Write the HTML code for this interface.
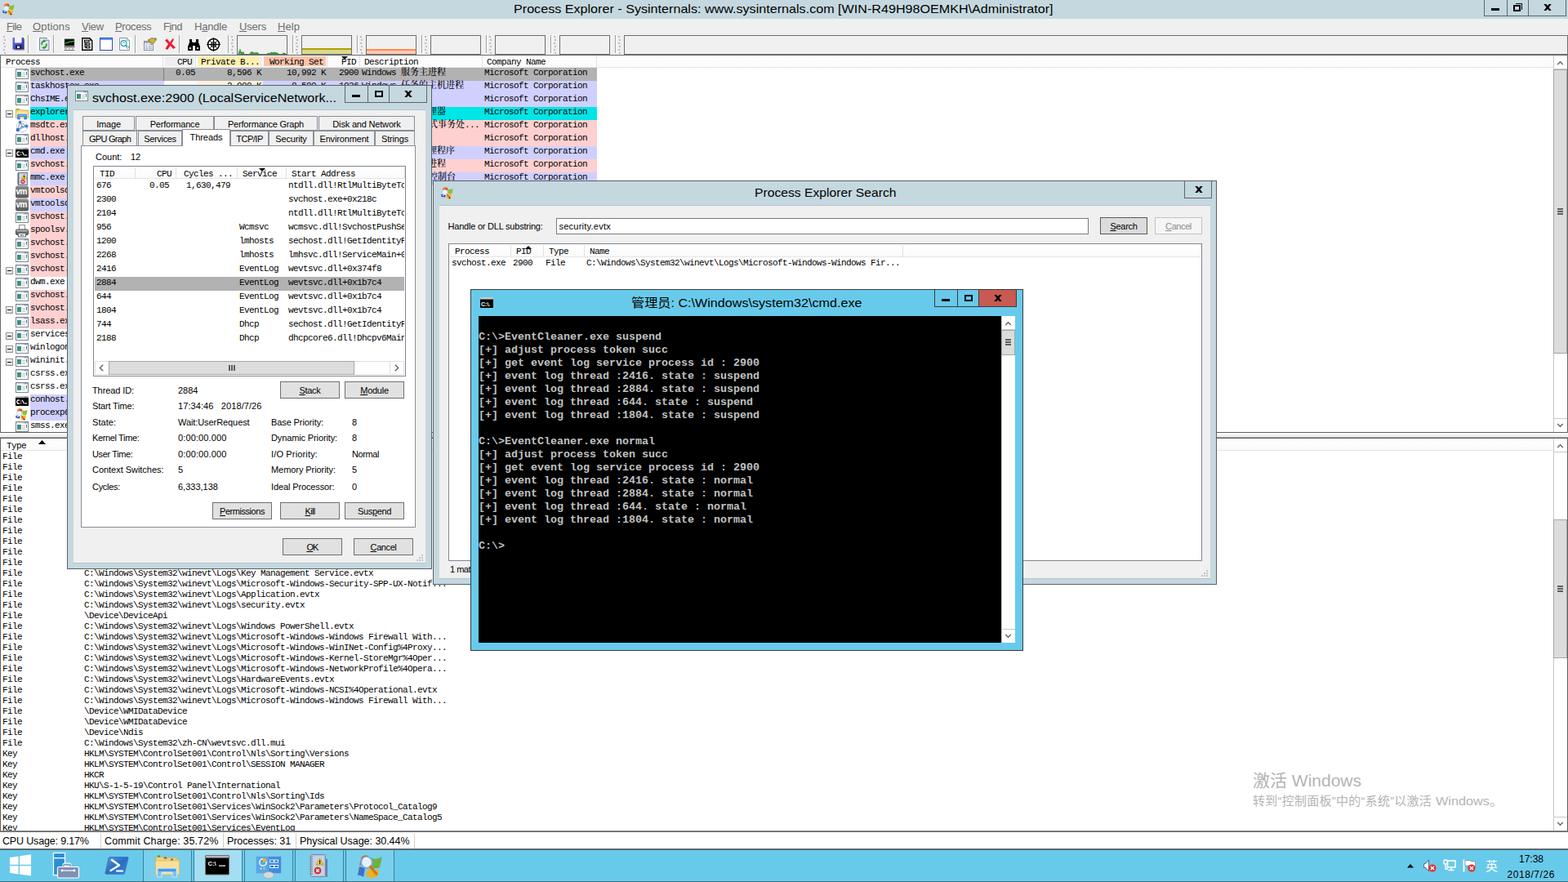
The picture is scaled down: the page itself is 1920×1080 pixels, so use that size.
<!DOCTYPE html><html><head><meta charset="utf-8"><title>Process Explorer</title><style>
*{box-sizing:border-box;margin:0;padding:0}
html,body{width:1920px;height:1080px;overflow:hidden;background:#fff}
body{position:relative;font-family:"Liberation Sans","Noto Sans CJK SC",sans-serif;font-size:11px;color:#000}
.a{position:absolute}
.m{font-family:"Liberation Mono","Noto Serif CJK SC",monospace;font-size:11px;letter-spacing:-0.6px;white-space:pre;line-height:14px;color:#000}
.c{font-family:"Liberation Serif","Noto Serif CJK SC",serif;font-size:11px;letter-spacing:0;line-height:0;font-weight:500;-webkit-text-stroke:0}
.t{white-space:pre;line-height:14px;font-size:11px}
.btn{position:absolute;border:1px solid #707070;background:#e1e1e1;text-align:center;font-size:11px;line-height:19px;white-space:pre}
.btn u{text-decoration:underline}
.tab{position:absolute;border:1px solid #898e98;border-bottom:none;background:#f0f0f0;text-align:center;font-size:11px;line-height:17px;white-space:pre}
.hd{position:absolute;background:#fff;border-right:1px solid #e5e5e5}
.cmd{font-family:"Liberation Mono",monospace;font-weight:bold;font-size:13.33px;line-height:16px;color:#c0c0c0;white-space:pre;letter-spacing:0}
</style></head><body>
<svg width="0" height="0" style="position:absolute"><defs><linearGradient id="wg" x1="0" y1="0" x2="1" y2="1"><stop offset="0" stop-color="#38789c"/><stop offset="1" stop-color="#4aa868"/></linearGradient><linearGradient id="wb" x1="0" y1="0" x2="0" y2="1"><stop offset="0" stop-color="#2848c0"/><stop offset="1" stop-color="#40a860"/></linearGradient></defs></svg>
<div class="a " style="left:0px;top:0px;width:1920px;height:23px;background:#c5d8df"></div>
<div class="a t" style="left:629px;top:1px;font-size:15px;line-height:20px;transform-origin:0 0;transform:scaleX(1.0753);">Process Explorer - Sysinternals: www.sysinternals.com [WIN-R49H98OEMKH\Administrator]</div>
<svg class="a" style="left:3px;top:3px" width="16" height="16" viewBox="0 0 16 16"><path d="M2 5 Q2.2 1.2 5.5 1 Q8.8 1.2 8.3 5Z" fill="#e8501c"/><path d="M3 3.2 Q4.5 1.2 6.5 1.6" stroke="#f8a030" stroke-width="1.2" fill="none"/><path d="M8.4 3.6 Q11 4.6 14.6 3 L13.4 8.6 Q11 9.6 8.4 8.6Z" fill="#86c03c"/><path d="M0.3 9.8 L5.5 11 L5 13.4 L0.3 12.8Z" fill="#2a48b4"/><path d="M1.2 11.2 L3 10.2 L3.6 12.2Z" fill="#d8ecff"/><path d="M7 9.4 Q10 10.2 13 9 L12 15 Q9 15.6 6.4 14.2Z" fill="#f6b61e"/><circle cx="4.6" cy="7.3" r="3.1" fill="#eaf8ff" stroke="#b0cce8" stroke-width="0.8"/><path d="M7.4 10.2 L10.6 14.2" stroke="#e0502a" stroke-width="1.3"/><path d="M10 14 L11 15" stroke="#201008" stroke-width="1.4"/></svg>
<div class="a " style="left:1817px;top:0px;width:101px;height:20px;border:1px solid #5e666e;border-top:none"></div>
<div class="a " style="left:1845px;top:0px;width:1px;height:19px;background:#5e666e"></div>
<div class="a " style="left:1871px;top:0px;width:1px;height:19px;background:#5e666e"></div>
<div class="a " style="left:1826px;top:10px;width:10px;height:3px;background:#000"></div>
<div class="a " style="left:1856px;top:4px;width:8px;height:8px;border-top:1.5px solid #000;border-right:1.5px solid #000"></div>
<div class="a " style="left:1853px;top:6px;width:9px;height:8px;border:2px solid #000;background:#c5d8df"></div>
<svg class="a" style="left:1890px;top:5px" width="10" height="8" viewBox="0 0 10 8"><path d="M0.3 0 L3.3 0 L5 2.3 L6.7 0 L9.7 0 L6.5 4 L9.7 8 L6.7 8 L5 5.7 L3.3 8 L0.3 8 L3.5 4Z" fill="#000"/></svg>
<div class="a " style="left:0px;top:23px;width:1920px;height:20px;background:#f0f0f0"></div>
<div class="a t" style="left:8px;top:24px;font-size:13px;line-height:17px;letter-spacing:-0.662px;color:#6d6d6d"><u>F</u>ile</div>
<div class="a t" style="left:40px;top:24px;font-size:13px;line-height:17px;letter-spacing:0.143px;color:#6d6d6d"><u>O</u>ptions</div>
<div class="a t" style="left:100px;top:24px;font-size:13px;line-height:17px;letter-spacing:-0.295px;color:#6d6d6d"><u>V</u>iew</div>
<div class="a t" style="left:141px;top:24px;font-size:13px;line-height:17px;letter-spacing:-0.394px;color:#6d6d6d"><u>P</u>rocess</div>
<div class="a t" style="left:200px;top:24px;font-size:13px;line-height:17px;letter-spacing:-0.623px;color:#6d6d6d">F<u>i</u>nd</div>
<div class="a t" style="left:238px;top:24px;font-size:13px;line-height:17px;letter-spacing:-0.200px;color:#6d6d6d">H<u>a</u>ndle</div>
<div class="a t" style="left:293px;top:24px;font-size:13px;line-height:17px;letter-spacing:-0.190px;color:#6d6d6d"><u>U</u>sers</div>
<div class="a t" style="left:340px;top:24px;font-size:13px;line-height:17px;letter-spacing:0.066px;color:#6d6d6d"><u>H</u>elp</div>
<div class="a " style="left:0px;top:43px;width:1920px;height:25px;background:#f0f0f0"></div>
<div class="a " style="left:4px;top:44px;width:2px;height:2px;background:#bcbcbc"></div>
<div class="a " style="left:5px;top:48px;width:2px;height:2px;background:#bcbcbc"></div>
<div class="a " style="left:4px;top:52px;width:2px;height:2px;background:#bcbcbc"></div>
<div class="a " style="left:5px;top:56px;width:2px;height:2px;background:#bcbcbc"></div>
<div class="a " style="left:4px;top:60px;width:2px;height:2px;background:#bcbcbc"></div>
<div class="a " style="left:5px;top:64px;width:2px;height:2px;background:#bcbcbc"></div>
<div class="a " style="left:34px;top:43px;width:1px;height:22px;background:#a0a0a0"></div>
<div class="a " style="left:35px;top:43px;width:1px;height:22px;background:#fff"></div>
<div class="a " style="left:65px;top:43px;width:1px;height:22px;background:#a0a0a0"></div>
<div class="a " style="left:66px;top:43px;width:1px;height:22px;background:#fff"></div>
<div class="a " style="left:165px;top:43px;width:1px;height:22px;background:#a0a0a0"></div>
<div class="a " style="left:166px;top:43px;width:1px;height:22px;background:#fff"></div>
<div class="a " style="left:219px;top:43px;width:1px;height:22px;background:#a0a0a0"></div>
<div class="a " style="left:220px;top:43px;width:1px;height:22px;background:#fff"></div>
<svg class="a" style="left:15px;top:46px" width="16" height="16" viewBox="0 0 16 16"><defs><linearGradient id="flg" x1="0" y1="0" x2="1" y2="1"><stop offset="0" stop-color="#6a7af0"/><stop offset="1" stop-color="#2a2a90"/></linearGradient></defs><rect x="0.5" y="0" width="13.5" height="14.5" fill="url(#flg)"/><rect x="3" y="0" width="8.5" height="6.5" fill="#f4f4fc"/><rect x="4" y="9" width="7.5" height="5.5" fill="#202058"/><rect x="6" y="10.5" width="3" height="2.5" fill="#e0e0f0"/><path d="M2 15h12.5V1.5" stroke="#707088" stroke-width="1" fill="none"/></svg>
<svg class="a" style="left:45px;top:46px" width="17" height="16" viewBox="0 0 17 16"><rect width="17" height="16" fill="#fcfcfc"/><path d="M3.5 0.5h8.5l3 3v12h-11.5z" fill="#e4e4f0" stroke="#6878b0" stroke-width="0.9"/><path d="M12 0.5v3h3" fill="#fff" stroke="#6878b0" stroke-width="0.8"/><path d="M9.5 4 a3.6 3.6 0 0 0 -3 5.2 M8.5 12.6 a3.6 3.6 0 0 0 3 -5.2" stroke="#28a428" stroke-width="1.9" fill="none"/><path d="M8.6 2 L11.8 4.2 L8.6 6.3Z M9.4 14.6 L6.2 12.4 L9.4 10.3Z" fill="#28a428"/></svg>
<svg class="a" style="left:76px;top:46px" width="16" height="16" viewBox="0 0 16 16"><rect width="16" height="16" fill="#fcfcfc"/><rect x="3" y="1.8" width="12" height="8.4" fill="#000" stroke="#808080" stroke-width="0.8"/><path d="M4 7.5 L6 6 L8 6.2 L10 4.6 L12 5.2 L14.5 4" stroke="#30c030" stroke-width="1.3" fill="none"/><rect x="2.5" y="11" width="13" height="1.2" fill="#606060"/><path d="M3 13.7h3 M7.5 13.7h2.5 M11.5 13.7h3" stroke="#808080" stroke-width="1"/><rect x="2.5" y="15" width="13" height="1" fill="#707070"/></svg>
<svg class="a" style="left:99px;top:46px" width="16" height="16" viewBox="0 0 16 16"><rect width="16" height="16" fill="#fcfcfc"/><path d="M1.8 0.7h9l3 3V15.3h-12z" fill="#fff" stroke="#000" stroke-width="1.4"/><path d="M10.8 0.7v3h3z" fill="#000"/><path d="M4.5 3.2h5.5v2h-5.5z M6.5 7h4.5v2h-4.5z M6.5 10.8h4.5v2h-4.5z" fill="none" stroke="#000" stroke-width="1.1"/><path d="M5 5v7h1.5 M5 8h1.5" stroke="#000" stroke-width="1.1" fill="none"/></svg>
<svg class="a" style="left:122px;top:46px" width="16" height="16" viewBox="0 0 16 16"><rect x="0.5" y="0.5" width="15" height="15" fill="#fff" stroke="#3848b8"/><rect x="1" y="1" width="14" height="2" fill="#5a98f0"/></svg>
<svg class="a" style="left:145px;top:46px" width="16" height="16" viewBox="0 0 16 16"><rect width="16" height="16" fill="#fcfcfc"/><path d="M1.5 0.5h9l3 3v12h-12z" fill="#fff" stroke="#8890a0"/><path d="M10.5 0.5v3h3" fill="none" stroke="#8890a0" stroke-width="0.8"/><circle cx="6.5" cy="7" r="3.4" fill="none" stroke="#20a0b0" stroke-width="1.2"/><path d="M5 7.2 L6.5 5.6 L8 7.2" stroke="#20a0b0" stroke-width="0.9" fill="none"/><path d="M9 9.6 L10.5 11" stroke="#20a0b0" stroke-width="1.3"/><rect x="10" y="10.5" width="2.4" height="2.4" transform="rotate(45 11.2 11.7)" fill="none" stroke="#20a0b0" stroke-width="0.9"/></svg>
<svg class="a" style="left:176px;top:46px" width="16" height="16" viewBox="0 0 16 16"><rect x="0.5" y="4.5" width="11" height="11" fill="#f4f4f4" stroke="#8090a0"/><rect x="1" y="5" width="10" height="2" fill="#a0b0c8"/><path d="M2 9h3 M6 9h4 M2 11.5h3 M6 11.5h4 M2 13.5h3 M6 13.5h4" stroke="#90a0c0"/><path d="M5 3 L10 0.5 L15 2 L13 6 L9.5 8.5 L8 5Z" fill="#d8b040" stroke="#806010" stroke-width="0.7"/><path d="M12.5 0.5 l3 0 0 3.5z" fill="#30a030"/></svg>
<svg class="a" style="left:201px;top:47px" width="15" height="14" viewBox="0 0 15 14"><path d="M1 2.5 L3.5 0.5 L7 5 L10.5 0 L12 1.5 L9 6.5 L14 11 L11.5 13 L7.5 9 L4 14 L1.5 12.5 L5 7Z" fill="#f01830"/></svg>
<svg class="a" style="left:229px;top:47px" width="17" height="15" viewBox="0 0 17 15"><path d="M3 1h3v3l1 1h3l1-1V1h3v4l2 5v5h-6V9H7v6H1V10l2-5z" fill="#000"/><rect x="3" y="11" width="2" height="2" fill="#fff"/><rect x="12" y="11" width="2" height="2" fill="#fff"/></svg>
<svg class="a" style="left:253px;top:46px" width="17" height="17" viewBox="0 0 17 17"><rect width="17" height="17" fill="#fcfcfc"/><circle cx="8.5" cy="8.5" r="7" fill="#fff" stroke="#000" stroke-width="1.6"/><circle cx="8.5" cy="8.5" r="3" fill="none" stroke="#000" stroke-width="1.2"/><path d="M8.5 0v17 M0 8.5h17" stroke="#000" stroke-width="1.2"/><path d="M3.5 3.5l10 10 M13.5 3.5l-10 10" stroke="#000" stroke-width="0.8"/></svg>
<div class="a " style="left:279px;top:43px;width:1px;height:22px;background:#a0a0a0"></div>
<div class="a " style="left:280px;top:43px;width:1px;height:22px;background:#fff"></div>
<div class="a " style="left:283px;top:44px;width:2px;height:2px;background:#bcbcbc"></div>
<div class="a " style="left:284px;top:48px;width:2px;height:2px;background:#bcbcbc"></div>
<div class="a " style="left:283px;top:52px;width:2px;height:2px;background:#bcbcbc"></div>
<div class="a " style="left:284px;top:56px;width:2px;height:2px;background:#bcbcbc"></div>
<div class="a " style="left:283px;top:60px;width:2px;height:2px;background:#bcbcbc"></div>
<div class="a " style="left:284px;top:64px;width:2px;height:2px;background:#bcbcbc"></div>
<div class="a " style="left:290px;top:43px;width:62px;height:24px;border:1px solid #6e6e6e;background:#f0f0f0"></div>
<div class="a " style="left:358px;top:43px;width:1px;height:22px;background:#a0a0a0"></div>
<div class="a " style="left:359px;top:43px;width:1px;height:22px;background:#fff"></div>
<div class="a " style="left:362px;top:44px;width:2px;height:2px;background:#bcbcbc"></div>
<div class="a " style="left:363px;top:48px;width:2px;height:2px;background:#bcbcbc"></div>
<div class="a " style="left:362px;top:52px;width:2px;height:2px;background:#bcbcbc"></div>
<div class="a " style="left:363px;top:56px;width:2px;height:2px;background:#bcbcbc"></div>
<div class="a " style="left:362px;top:60px;width:2px;height:2px;background:#bcbcbc"></div>
<div class="a " style="left:363px;top:64px;width:2px;height:2px;background:#bcbcbc"></div>
<div class="a " style="left:369px;top:43px;width:62px;height:24px;border:1px solid #6e6e6e;background:#f0f0f0"></div>
<div class="a " style="left:437px;top:43px;width:1px;height:22px;background:#a0a0a0"></div>
<div class="a " style="left:438px;top:43px;width:1px;height:22px;background:#fff"></div>
<div class="a " style="left:441px;top:44px;width:2px;height:2px;background:#bcbcbc"></div>
<div class="a " style="left:442px;top:48px;width:2px;height:2px;background:#bcbcbc"></div>
<div class="a " style="left:441px;top:52px;width:2px;height:2px;background:#bcbcbc"></div>
<div class="a " style="left:442px;top:56px;width:2px;height:2px;background:#bcbcbc"></div>
<div class="a " style="left:441px;top:60px;width:2px;height:2px;background:#bcbcbc"></div>
<div class="a " style="left:442px;top:64px;width:2px;height:2px;background:#bcbcbc"></div>
<div class="a " style="left:448px;top:43px;width:62px;height:24px;border:1px solid #6e6e6e;background:#f0f0f0"></div>
<div class="a " style="left:516px;top:43px;width:1px;height:22px;background:#a0a0a0"></div>
<div class="a " style="left:517px;top:43px;width:1px;height:22px;background:#fff"></div>
<div class="a " style="left:520px;top:44px;width:2px;height:2px;background:#bcbcbc"></div>
<div class="a " style="left:521px;top:48px;width:2px;height:2px;background:#bcbcbc"></div>
<div class="a " style="left:520px;top:52px;width:2px;height:2px;background:#bcbcbc"></div>
<div class="a " style="left:521px;top:56px;width:2px;height:2px;background:#bcbcbc"></div>
<div class="a " style="left:520px;top:60px;width:2px;height:2px;background:#bcbcbc"></div>
<div class="a " style="left:521px;top:64px;width:2px;height:2px;background:#bcbcbc"></div>
<div class="a " style="left:527px;top:43px;width:62px;height:24px;border:1px solid #6e6e6e;background:#f0f0f0"></div>
<div class="a " style="left:595px;top:43px;width:1px;height:22px;background:#a0a0a0"></div>
<div class="a " style="left:596px;top:43px;width:1px;height:22px;background:#fff"></div>
<div class="a " style="left:599px;top:44px;width:2px;height:2px;background:#bcbcbc"></div>
<div class="a " style="left:600px;top:48px;width:2px;height:2px;background:#bcbcbc"></div>
<div class="a " style="left:599px;top:52px;width:2px;height:2px;background:#bcbcbc"></div>
<div class="a " style="left:600px;top:56px;width:2px;height:2px;background:#bcbcbc"></div>
<div class="a " style="left:599px;top:60px;width:2px;height:2px;background:#bcbcbc"></div>
<div class="a " style="left:600px;top:64px;width:2px;height:2px;background:#bcbcbc"></div>
<div class="a " style="left:606px;top:43px;width:62px;height:24px;border:1px solid #6e6e6e;background:#f0f0f0"></div>
<div class="a " style="left:674px;top:43px;width:1px;height:22px;background:#a0a0a0"></div>
<div class="a " style="left:675px;top:43px;width:1px;height:22px;background:#fff"></div>
<div class="a " style="left:678px;top:44px;width:2px;height:2px;background:#bcbcbc"></div>
<div class="a " style="left:679px;top:48px;width:2px;height:2px;background:#bcbcbc"></div>
<div class="a " style="left:678px;top:52px;width:2px;height:2px;background:#bcbcbc"></div>
<div class="a " style="left:679px;top:56px;width:2px;height:2px;background:#bcbcbc"></div>
<div class="a " style="left:678px;top:60px;width:2px;height:2px;background:#bcbcbc"></div>
<div class="a " style="left:679px;top:64px;width:2px;height:2px;background:#bcbcbc"></div>
<div class="a " style="left:685px;top:43px;width:62px;height:24px;border:1px solid #6e6e6e;background:#f0f0f0"></div>
<div class="a " style="left:753px;top:43px;width:1px;height:22px;background:#a0a0a0"></div>
<div class="a " style="left:754px;top:43px;width:1px;height:22px;background:#fff"></div>
<div class="a " style="left:757px;top:44px;width:2px;height:2px;background:#bcbcbc"></div>
<div class="a " style="left:758px;top:48px;width:2px;height:2px;background:#bcbcbc"></div>
<div class="a " style="left:757px;top:52px;width:2px;height:2px;background:#bcbcbc"></div>
<div class="a " style="left:758px;top:56px;width:2px;height:2px;background:#bcbcbc"></div>
<div class="a " style="left:757px;top:60px;width:2px;height:2px;background:#bcbcbc"></div>
<div class="a " style="left:758px;top:64px;width:2px;height:2px;background:#bcbcbc"></div>
<div class="a " style="left:764px;top:43px;width:1156px;height:24px;border:1px solid #6e6e6e;background:#f0f0f0"></div>
<svg class="a" style="left:291px;top:44px" width="60" height="22" viewBox="0 0 60 22"><path d="M1 22 L1.5 19 L2.5 19 L3 16 L3.5 19 L4.5 19 L5 21 L6 20 L7 19.5 L8 22Z M15 22 L16 20 L18 19.5 L19.5 20.5 L21 21 L22 20.5 L24 20.5 L25 21 L26 22Z M36 22 L37 21 L38 21.5 L40 21 L41 20 L43 20.5 L45 20 L47 20.5 L49 21 L50 22Z M55 22 L55.5 21 L58 21 L58.5 22Z" fill="#30b030" stroke="#109010" stroke-width="0.6"/><path d="M6.5 21h1.5v1h-1.5z M17 21h1.5v1h-1.5z" fill="#f03050"/><rect x="2" y="21" width="2" height="1" fill="#a0a0a0"/></svg>
<div class="a " style="left:370px;top:59px;width:60px;height:7px;background:#d9d98e;border-top:2px solid #b0a000"></div>
<div class="a " style="left:449px;top:60px;width:60px;height:6px;background:#ffc9b2;border-top:2px solid #ff8c50"></div>
<div class="a " style="left:0px;top:67px;width:1920px;height:463px;background:#fff;border:1px solid #696969;border-bottom-color:#606060"></div>
<div class="a " style="left:1px;top:68px;width:1901px;height:15px;background:linear-gradient(#fff,#fafafa);border-bottom:1px solid #e5e5e5"></div>
<div class="a " style="left:199px;top:68px;width:1px;height:14px;background:#e0e0e0"></div>
<div class="a m" style="left:7px;top:69px;">Process</div>
<div class="a " style="left:239px;top:68px;width:1px;height:14px;background:#e0e0e0"></div>
<div class="a " style="left:202px;top:69px;width:36px;height:12px;background:#efefef"></div>
<div class="a m" style="left:201px;top:69px;width:34px;text-align:right">CPU</div>
<div class="a " style="left:319px;top:68px;width:1px;height:14px;background:#e0e0e0"></div>
<div class="a " style="left:242px;top:69px;width:76px;height:12px;background:#fdf0b0"></div>
<div class="a m" style="left:246px;top:69px;">Private B...</div>
<div class="a " style="left:400px;top:68px;width:1px;height:14px;background:#e0e0e0"></div>
<div class="a " style="left:323px;top:69px;width:76px;height:12px;background:#fcc4a8"></div>
<div class="a m" style="left:322px;top:69px;width:74px;text-align:right">Working Set</div>
<div class="a " style="left:440px;top:68px;width:1px;height:14px;background:#e0e0e0"></div>
<div class="a m" style="left:402px;top:69px;width:34px;text-align:right">PID</div>
<div class="a " style="left:590px;top:68px;width:1px;height:14px;background:#e0e0e0"></div>
<div class="a m" style="left:446px;top:69px;">Description</div>
<div class="a " style="left:730px;top:68px;width:1px;height:14px;background:#e0e0e0"></div>
<div class="a m" style="left:596px;top:69px;">Company Name</div>
<svg class="a" style="left:418px;top:69px" width="8" height="4"><path d="M0 0 L8 0 L4 4Z" fill="#000"/></svg>
<div class="a " style="left:37px;top:83px;width:694px;height:16px;background:#b2b2b2"></div>
<div class="a " style="left:200px;top:83px;width:1px;height:16px;background:#808080"></div>
<div class="a m" style="left:37px;top:82px;">svchost.exe</div>
<svg class="a" style="left:19px;top:83px" width="16" height="16" viewBox="0 0 16 16"><rect x="0.5" y="1.5" width="15" height="12" fill="#fff" stroke="#7e868e"/><rect x="1" y="2" width="14" height="1.6" fill="#d4dae6"/><path d="M10.5 2.3h1v1h-1z M12 2.3h1v1h-1z M13.5 2.3h1v1h-1z" fill="#5a6a9a"/><rect x="2" y="5" width="5" height="6" fill="url(#wg)"/><path d="M8 6.5h4 M8 8.5h4 M8 10.5h4" stroke="#c4c4c4"/><rect x="13" y="5" width="1" height="4" fill="url(#wb)"/></svg>
<div class="a m" style="left:149px;top:82px;width:90px;text-align:right">0.05</div>
<div class="a m" style="left:230px;top:82px;width:90px;text-align:right">8,596 K</div>
<div class="a m" style="left:309px;top:82px;width:90px;text-align:right">10,992 K</div>
<div class="a m" style="left:349px;top:82px;width:90px;text-align:right">2900</div>
<div class="a m" style="left:443px;top:82px;">Windows <span class="c">服务主进程</span></div>
<div class="a m" style="left:593px;top:82px;">Microsoft Corporation</div>
<div class="a " style="left:37px;top:99px;width:694px;height:16px;background:#d0d0ff"></div>
<div class="a " style="left:201px;top:99px;width:40px;height:16px;background:#f8f8f8"></div>
<div class="a " style="left:241px;top:99px;width:81px;height:16px;background:#fff0e0"></div>
<div class="a m" style="left:37px;top:98px;">taskhostex.exe</div>
<svg class="a" style="left:19px;top:99px" width="16" height="16" viewBox="0 0 16 16"><rect x="0.5" y="1.5" width="15" height="12" fill="#fff" stroke="#7e868e"/><rect x="1" y="2" width="14" height="1.6" fill="#d4dae6"/><path d="M10.5 2.3h1v1h-1z M12 2.3h1v1h-1z M13.5 2.3h1v1h-1z" fill="#5a6a9a"/><rect x="2" y="5" width="5" height="6" fill="url(#wg)"/><path d="M8 6.5h4 M8 8.5h4 M8 10.5h4" stroke="#c4c4c4"/><rect x="13" y="5" width="1" height="4" fill="url(#wb)"/></svg>
<div class="a m" style="left:230px;top:98px;width:90px;text-align:right">2,908 K</div>
<div class="a m" style="left:309px;top:98px;width:90px;text-align:right">8,580 K</div>
<div class="a m" style="left:349px;top:98px;width:90px;text-align:right">1936</div>
<div class="a m" style="left:443px;top:98px;">Windows <span class="c">任务的主机进程</span></div>
<div class="a m" style="left:593px;top:98px;">Microsoft Corporation</div>
<div class="a " style="left:37px;top:115px;width:694px;height:16px;background:#d0d0ff"></div>
<div class="a m" style="left:37px;top:114px;">ChsIME.exe</div>
<svg class="a" style="left:19px;top:115px" width="16" height="16" viewBox="0 0 16 16"><rect x="0.5" y="1.5" width="15" height="12" fill="#fff" stroke="#7e868e"/><rect x="1" y="2" width="14" height="1.6" fill="#d4dae6"/><path d="M10.5 2.3h1v1h-1z M12 2.3h1v1h-1z M13.5 2.3h1v1h-1z" fill="#5a6a9a"/><rect x="2" y="5" width="5" height="6" fill="url(#wg)"/><path d="M8 6.5h4 M8 8.5h4 M8 10.5h4" stroke="#c4c4c4"/><rect x="13" y="5" width="1" height="4" fill="url(#wb)"/></svg>
<div class="a m" style="left:593px;top:114px;">Microsoft Corporation</div>
<div class="a " style="left:37px;top:131px;width:694px;height:16px;background:#00e6e6"></div>
<div class="a m" style="left:37px;top:130px;">explorer.exe</div>
<div class="a " style="left:7px;top:135px;width:9px;height:9px;border:1px solid #919191;background:linear-gradient(#fff,#dcdcdc)"></div>
<div class="a " style="left:9px;top:139px;width:5px;height:1px;background:#000"></div>
<svg class="a" style="left:19px;top:131px" width="16" height="16" viewBox="0 0 16 16"><path d="M0.5 2.5h5l1.5 1.5h8.5v9.5h-15z" fill="#f6d988" stroke="#d9ae48"/><rect x="1.5" y="2.7" width="2.5" height="1" fill="#30a030"/><path d="M1 6h14v7.5h-14z" fill="#fbe7a6"/><path d="M3.5 9 h9 a1 1 0 0 1 1 1 V15 h-3 v-3 h-5 v3 h-3 V10 a1 1 0 0 1 1 -1Z" fill="#3f8fe4" stroke="#2a68c0" stroke-width="0.6"/><rect x="5.5" y="12" width="5" height="2" fill="#f6d988"/><path d="M3.5 10.2h9" stroke="#9ccbf6" stroke-width="1"/></svg>
<div class="a m" style="left:443px;top:130px;">Windows <span class="c">资源管理器</span></div>
<div class="a m" style="left:593px;top:130px;">Microsoft Corporation</div>
<div class="a " style="left:37px;top:147px;width:694px;height:16px;background:#ffd0d0"></div>
<div class="a m" style="left:37px;top:146px;">msdtc.exe</div>
<svg class="a" style="left:19px;top:147px" width="16" height="16" viewBox="0 0 16 16"><circle cx="8" cy="8" r="6.8" fill="none" stroke="#c8ccd4" stroke-width="1"/><path d="M5.5 2.5 L2.8 12 L13.5 7.5Z M5.5 2.5 L8 8 L2.8 12 M8 8 L13.5 7.5" fill="none" stroke="#8aa0c0" stroke-width="1.1"/><circle cx="5.5" cy="2.5" r="1.7" fill="#4a7ed0"/><circle cx="2.8" cy="12" r="2.2" fill="#3a70c8"/><circle cx="13.5" cy="7.5" r="2" fill="#4a7ed0"/><circle cx="8" cy="8" r="1.2" fill="#6a94d8"/></svg>
<div class="a m" style="left:443px;top:146px;">Microsoft <span class="c">分布式事务处</span>...</div>
<div class="a m" style="left:593px;top:146px;">Microsoft Corporation</div>
<div class="a " style="left:37px;top:163px;width:694px;height:16px;background:#ffd0d0"></div>
<div class="a m" style="left:37px;top:162px;">dllhost.exe</div>
<svg class="a" style="left:19px;top:163px" width="16" height="16" viewBox="0 0 16 16"><rect x="0.5" y="1.5" width="15" height="12" fill="#fff" stroke="#7e868e"/><rect x="1" y="2" width="14" height="1.6" fill="#d4dae6"/><path d="M10.5 2.3h1v1h-1z M12 2.3h1v1h-1z M13.5 2.3h1v1h-1z" fill="#5a6a9a"/><rect x="2" y="5" width="5" height="6" fill="url(#wg)"/><path d="M8 6.5h4 M8 8.5h4 M8 10.5h4" stroke="#c4c4c4"/><rect x="13" y="5" width="1" height="4" fill="url(#wb)"/></svg>
<div class="a m" style="left:593px;top:162px;">Microsoft Corporation</div>
<div class="a " style="left:37px;top:179px;width:694px;height:16px;background:#d0d0ff"></div>
<div class="a m" style="left:37px;top:178px;">cmd.exe</div>
<div class="a " style="left:7px;top:183px;width:9px;height:9px;border:1px solid #919191;background:linear-gradient(#fff,#dcdcdc)"></div>
<div class="a " style="left:9px;top:187px;width:5px;height:1px;background:#000"></div>
<svg class="a" style="left:19px;top:179px" width="16" height="16" viewBox="0 0 16 16"><rect x="0" y="2" width="16" height="12" fill="#000"/><rect x="0" y="2" width="16" height="2" fill="#b8bcc4"/><path d="M10.5 2.5h1v1h-1z M12 2.5h1v1h-1z M13.5 2.5h1v1h-1z" fill="#5a6a9a"/><path d="M5 7.3 A2 2.2 0 1 0 5 10.7" stroke="#fff" stroke-width="1.3" fill="none"/><path d="M6.6 7.6v1 M6.6 10v1" stroke="#fff" stroke-width="1.2"/><path d="M8.2 6.8 L10.5 11.2" stroke="#fff" stroke-width="1.2"/><path d="M11.3 11h2.5" stroke="#fff" stroke-width="1.4"/></svg>
<div class="a m" style="left:443px;top:178px;">Windows <span class="c">命令处理程序</span></div>
<div class="a m" style="left:593px;top:178px;">Microsoft Corporation</div>
<div class="a " style="left:37px;top:195px;width:694px;height:16px;background:#ffd0d0"></div>
<div class="a m" style="left:37px;top:194px;">svchost.exe</div>
<svg class="a" style="left:19px;top:195px" width="16" height="16" viewBox="0 0 16 16"><rect x="0.5" y="1.5" width="15" height="12" fill="#fff" stroke="#7e868e"/><rect x="1" y="2" width="14" height="1.6" fill="#d4dae6"/><path d="M10.5 2.3h1v1h-1z M12 2.3h1v1h-1z M13.5 2.3h1v1h-1z" fill="#5a6a9a"/><rect x="2" y="5" width="5" height="6" fill="url(#wg)"/><path d="M8 6.5h4 M8 8.5h4 M8 10.5h4" stroke="#c4c4c4"/><rect x="13" y="5" width="1" height="4" fill="url(#wb)"/></svg>
<div class="a m" style="left:443px;top:194px;">Windows <span class="c">服务主进程</span></div>
<div class="a m" style="left:593px;top:194px;">Microsoft Corporation</div>
<div class="a " style="left:37px;top:211px;width:694px;height:16px;background:#d0d0ff"></div>
<div class="a m" style="left:37px;top:210px;">mmc.exe</div>
<svg class="a" style="left:19px;top:211px" width="16" height="16" viewBox="0 0 16 16"><rect x="3.5" y="0.5" width="11" height="15" fill="#c4cee4" stroke="#6a7cb0"/><path d="M5 3.5h8 M5 5.5h8 M5 7.5h8 M5 9.5h8 M5 11.5h8 M5 13.5h8" stroke="#e4e9f4" stroke-width="0.8"/><path d="M2 2h2.5 M2 4h2.5 M2 6h2.5 M2 8h2.5 M2 10h2.5 M2 12h2.5 M2 14h2.5" stroke="#50586a" stroke-width="1"/><path d="M10.5 2 L13.8 8h-6.6z" fill="#f8d020" stroke="#b08800" stroke-width="0.5"/><path d="M10.5 4v2.2 M10.5 6.8v0.8" stroke="#000" stroke-width="0.9"/><circle cx="9" cy="11.5" r="2.7" fill="#e03838"/><path d="M8 10.5l2 2M10 10.5l-2 2" stroke="#fff" stroke-width="0.9"/></svg>
<div class="a m" style="left:443px;top:210px;">Microsoft <span class="c">管理控制台</span></div>
<div class="a m" style="left:593px;top:210px;">Microsoft Corporation</div>
<div class="a " style="left:37px;top:227px;width:120px;height:16px;background:#ffd0d0"></div>
<div class="a m" style="left:37px;top:226px;">vmtoolsd.exe</div>
<svg class="a" style="left:19px;top:227px" width="16" height="16" viewBox="0 0 16 16"><defs><linearGradient id="vmg" x1="0" y1="0" x2="0" y2="1"><stop offset="0" stop-color="#8c8c8c"/><stop offset="1" stop-color="#585858"/></linearGradient></defs><rect x="0" y="0.5" width="16" height="15" rx="2.5" fill="url(#vmg)"/><text x="0.6" y="11.3" font-family="Liberation Sans, sans-serif" font-size="10" font-weight="bold" fill="#fff" letter-spacing="-0.7">vm</text></svg>
<div class="a " style="left:37px;top:243px;width:120px;height:16px;background:#d0d0ff"></div>
<div class="a m" style="left:37px;top:242px;">vmtoolsd.exe</div>
<svg class="a" style="left:19px;top:243px" width="16" height="16" viewBox="0 0 16 16"><defs><linearGradient id="vmg" x1="0" y1="0" x2="0" y2="1"><stop offset="0" stop-color="#8c8c8c"/><stop offset="1" stop-color="#585858"/></linearGradient></defs><rect x="0" y="0.5" width="16" height="15" rx="2.5" fill="url(#vmg)"/><text x="0.6" y="11.3" font-family="Liberation Sans, sans-serif" font-size="10" font-weight="bold" fill="#fff" letter-spacing="-0.7">vm</text></svg>
<div class="a " style="left:37px;top:259px;width:120px;height:16px;background:#ffd0d0"></div>
<div class="a m" style="left:37px;top:258px;">svchost.exe</div>
<svg class="a" style="left:19px;top:259px" width="16" height="16" viewBox="0 0 16 16"><rect x="0.5" y="1.5" width="15" height="12" fill="#fff" stroke="#7e868e"/><rect x="1" y="2" width="14" height="1.6" fill="#d4dae6"/><path d="M10.5 2.3h1v1h-1z M12 2.3h1v1h-1z M13.5 2.3h1v1h-1z" fill="#5a6a9a"/><rect x="2" y="5" width="5" height="6" fill="url(#wg)"/><path d="M8 6.5h4 M8 8.5h4 M8 10.5h4" stroke="#c4c4c4"/><rect x="13" y="5" width="1" height="4" fill="url(#wb)"/></svg>
<div class="a " style="left:37px;top:275px;width:120px;height:16px;background:#ffd0d0"></div>
<div class="a m" style="left:37px;top:274px;">spoolsv.exe</div>
<svg class="a" style="left:19px;top:275px" width="16" height="16" viewBox="0 0 16 16"><rect x="4.5" y="0.5" width="7" height="6" fill="#fff" stroke="#909090"/><rect x="0.5" y="6" width="15" height="6.5" rx="1.5" fill="#707070" stroke="#484848"/><rect x="1" y="6.5" width="14" height="2" rx="1" fill="#b0b0b0"/><rect x="3.5" y="10.5" width="9" height="4.5" fill="#fff" stroke="#606060"/><rect x="6" y="12" width="2" height="1.5" fill="#3060d0"/><rect x="8.5" y="12" width="1.5" height="1.5" fill="#30a040"/></svg>
<div class="a " style="left:37px;top:291px;width:120px;height:16px;background:#ffd0d0"></div>
<div class="a m" style="left:37px;top:290px;">svchost.exe</div>
<svg class="a" style="left:19px;top:291px" width="16" height="16" viewBox="0 0 16 16"><rect x="0.5" y="1.5" width="15" height="12" fill="#fff" stroke="#7e868e"/><rect x="1" y="2" width="14" height="1.6" fill="#d4dae6"/><path d="M10.5 2.3h1v1h-1z M12 2.3h1v1h-1z M13.5 2.3h1v1h-1z" fill="#5a6a9a"/><rect x="2" y="5" width="5" height="6" fill="url(#wg)"/><path d="M8 6.5h4 M8 8.5h4 M8 10.5h4" stroke="#c4c4c4"/><rect x="13" y="5" width="1" height="4" fill="url(#wb)"/></svg>
<div class="a " style="left:37px;top:307px;width:120px;height:16px;background:#ffd0d0"></div>
<div class="a m" style="left:37px;top:306px;">svchost.exe</div>
<svg class="a" style="left:19px;top:307px" width="16" height="16" viewBox="0 0 16 16"><rect x="0.5" y="1.5" width="15" height="12" fill="#fff" stroke="#7e868e"/><rect x="1" y="2" width="14" height="1.6" fill="#d4dae6"/><path d="M10.5 2.3h1v1h-1z M12 2.3h1v1h-1z M13.5 2.3h1v1h-1z" fill="#5a6a9a"/><rect x="2" y="5" width="5" height="6" fill="url(#wg)"/><path d="M8 6.5h4 M8 8.5h4 M8 10.5h4" stroke="#c4c4c4"/><rect x="13" y="5" width="1" height="4" fill="url(#wb)"/></svg>
<div class="a " style="left:37px;top:323px;width:120px;height:16px;background:#ffd0d0"></div>
<div class="a m" style="left:37px;top:322px;">svchost.exe</div>
<div class="a " style="left:7px;top:327px;width:9px;height:9px;border:1px solid #919191;background:linear-gradient(#fff,#dcdcdc)"></div>
<div class="a " style="left:9px;top:331px;width:5px;height:1px;background:#000"></div>
<svg class="a" style="left:19px;top:323px" width="16" height="16" viewBox="0 0 16 16"><rect x="0.5" y="1.5" width="15" height="12" fill="#fff" stroke="#7e868e"/><rect x="1" y="2" width="14" height="1.6" fill="#d4dae6"/><path d="M10.5 2.3h1v1h-1z M12 2.3h1v1h-1z M13.5 2.3h1v1h-1z" fill="#5a6a9a"/><rect x="2" y="5" width="5" height="6" fill="url(#wg)"/><path d="M8 6.5h4 M8 8.5h4 M8 10.5h4" stroke="#c4c4c4"/><rect x="13" y="5" width="1" height="4" fill="url(#wb)"/></svg>
<div class="a m" style="left:37px;top:338px;">dwm.exe</div>
<svg class="a" style="left:19px;top:339px" width="16" height="16" viewBox="0 0 16 16"><rect x="0.5" y="1.5" width="15" height="12" fill="#fff" stroke="#7e868e"/><rect x="1" y="2" width="14" height="1.6" fill="#d4dae6"/><path d="M10.5 2.3h1v1h-1z M12 2.3h1v1h-1z M13.5 2.3h1v1h-1z" fill="#5a6a9a"/><rect x="2" y="5" width="5" height="6" fill="url(#wg)"/><path d="M8 6.5h4 M8 8.5h4 M8 10.5h4" stroke="#c4c4c4"/><rect x="13" y="5" width="1" height="4" fill="url(#wb)"/></svg>
<div class="a " style="left:37px;top:355px;width:120px;height:16px;background:#ffd0d0"></div>
<div class="a m" style="left:37px;top:354px;">svchost.exe</div>
<svg class="a" style="left:19px;top:355px" width="16" height="16" viewBox="0 0 16 16"><rect x="0.5" y="1.5" width="15" height="12" fill="#fff" stroke="#7e868e"/><rect x="1" y="2" width="14" height="1.6" fill="#d4dae6"/><path d="M10.5 2.3h1v1h-1z M12 2.3h1v1h-1z M13.5 2.3h1v1h-1z" fill="#5a6a9a"/><rect x="2" y="5" width="5" height="6" fill="url(#wg)"/><path d="M8 6.5h4 M8 8.5h4 M8 10.5h4" stroke="#c4c4c4"/><rect x="13" y="5" width="1" height="4" fill="url(#wb)"/></svg>
<div class="a " style="left:37px;top:371px;width:120px;height:16px;background:#ffd0d0"></div>
<div class="a m" style="left:37px;top:370px;">svchost.exe</div>
<div class="a " style="left:7px;top:375px;width:9px;height:9px;border:1px solid #919191;background:linear-gradient(#fff,#dcdcdc)"></div>
<div class="a " style="left:9px;top:379px;width:5px;height:1px;background:#000"></div>
<svg class="a" style="left:19px;top:371px" width="16" height="16" viewBox="0 0 16 16"><rect x="0.5" y="1.5" width="15" height="12" fill="#fff" stroke="#7e868e"/><rect x="1" y="2" width="14" height="1.6" fill="#d4dae6"/><path d="M10.5 2.3h1v1h-1z M12 2.3h1v1h-1z M13.5 2.3h1v1h-1z" fill="#5a6a9a"/><rect x="2" y="5" width="5" height="6" fill="url(#wg)"/><path d="M8 6.5h4 M8 8.5h4 M8 10.5h4" stroke="#c4c4c4"/><rect x="13" y="5" width="1" height="4" fill="url(#wb)"/></svg>
<div class="a " style="left:37px;top:387px;width:120px;height:16px;background:#ffd0d0"></div>
<div class="a m" style="left:37px;top:386px;">lsass.exe</div>
<svg class="a" style="left:19px;top:387px" width="16" height="16" viewBox="0 0 16 16"><rect x="0.5" y="1.5" width="15" height="12" fill="#fff" stroke="#7e868e"/><rect x="1" y="2" width="14" height="1.6" fill="#d4dae6"/><path d="M10.5 2.3h1v1h-1z M12 2.3h1v1h-1z M13.5 2.3h1v1h-1z" fill="#5a6a9a"/><rect x="2" y="5" width="5" height="6" fill="url(#wg)"/><path d="M8 6.5h4 M8 8.5h4 M8 10.5h4" stroke="#c4c4c4"/><rect x="13" y="5" width="1" height="4" fill="url(#wb)"/></svg>
<div class="a m" style="left:37px;top:402px;">services.exe</div>
<div class="a " style="left:7px;top:407px;width:9px;height:9px;border:1px solid #919191;background:linear-gradient(#fff,#dcdcdc)"></div>
<div class="a " style="left:9px;top:411px;width:5px;height:1px;background:#000"></div>
<svg class="a" style="left:19px;top:403px" width="16" height="16" viewBox="0 0 16 16"><rect x="0.5" y="1.5" width="15" height="12" fill="#fff" stroke="#7e868e"/><rect x="1" y="2" width="14" height="1.6" fill="#d4dae6"/><path d="M10.5 2.3h1v1h-1z M12 2.3h1v1h-1z M13.5 2.3h1v1h-1z" fill="#5a6a9a"/><rect x="2" y="5" width="5" height="6" fill="url(#wg)"/><path d="M8 6.5h4 M8 8.5h4 M8 10.5h4" stroke="#c4c4c4"/><rect x="13" y="5" width="1" height="4" fill="url(#wb)"/></svg>
<div class="a m" style="left:37px;top:418px;">winlogon.exe</div>
<div class="a " style="left:7px;top:423px;width:9px;height:9px;border:1px solid #919191;background:linear-gradient(#fff,#dcdcdc)"></div>
<div class="a " style="left:9px;top:427px;width:5px;height:1px;background:#000"></div>
<svg class="a" style="left:19px;top:419px" width="16" height="16" viewBox="0 0 16 16"><rect x="0.5" y="1.5" width="15" height="12" fill="#fff" stroke="#7e868e"/><rect x="1" y="2" width="14" height="1.6" fill="#d4dae6"/><path d="M10.5 2.3h1v1h-1z M12 2.3h1v1h-1z M13.5 2.3h1v1h-1z" fill="#5a6a9a"/><rect x="2" y="5" width="5" height="6" fill="url(#wg)"/><path d="M8 6.5h4 M8 8.5h4 M8 10.5h4" stroke="#c4c4c4"/><rect x="13" y="5" width="1" height="4" fill="url(#wb)"/></svg>
<div class="a m" style="left:37px;top:434px;">wininit.exe</div>
<div class="a " style="left:7px;top:439px;width:9px;height:9px;border:1px solid #919191;background:linear-gradient(#fff,#dcdcdc)"></div>
<div class="a " style="left:9px;top:443px;width:5px;height:1px;background:#000"></div>
<svg class="a" style="left:19px;top:435px" width="16" height="16" viewBox="0 0 16 16"><rect x="0.5" y="1.5" width="15" height="12" fill="#fff" stroke="#7e868e"/><rect x="1" y="2" width="14" height="1.6" fill="#d4dae6"/><path d="M10.5 2.3h1v1h-1z M12 2.3h1v1h-1z M13.5 2.3h1v1h-1z" fill="#5a6a9a"/><rect x="2" y="5" width="5" height="6" fill="url(#wg)"/><path d="M8 6.5h4 M8 8.5h4 M8 10.5h4" stroke="#c4c4c4"/><rect x="13" y="5" width="1" height="4" fill="url(#wb)"/></svg>
<div class="a m" style="left:37px;top:450px;">csrss.exe</div>
<svg class="a" style="left:19px;top:451px" width="16" height="16" viewBox="0 0 16 16"><rect x="0.5" y="1.5" width="15" height="12" fill="#fff" stroke="#7e868e"/><rect x="1" y="2" width="14" height="1.6" fill="#d4dae6"/><path d="M10.5 2.3h1v1h-1z M12 2.3h1v1h-1z M13.5 2.3h1v1h-1z" fill="#5a6a9a"/><rect x="2" y="5" width="5" height="6" fill="url(#wg)"/><path d="M8 6.5h4 M8 8.5h4 M8 10.5h4" stroke="#c4c4c4"/><rect x="13" y="5" width="1" height="4" fill="url(#wb)"/></svg>
<div class="a m" style="left:37px;top:466px;">csrss.exe</div>
<svg class="a" style="left:19px;top:467px" width="16" height="16" viewBox="0 0 16 16"><rect x="0.5" y="1.5" width="15" height="12" fill="#fff" stroke="#7e868e"/><rect x="1" y="2" width="14" height="1.6" fill="#d4dae6"/><path d="M10.5 2.3h1v1h-1z M12 2.3h1v1h-1z M13.5 2.3h1v1h-1z" fill="#5a6a9a"/><rect x="2" y="5" width="5" height="6" fill="url(#wg)"/><path d="M8 6.5h4 M8 8.5h4 M8 10.5h4" stroke="#c4c4c4"/><rect x="13" y="5" width="1" height="4" fill="url(#wb)"/></svg>
<div class="a " style="left:37px;top:483px;width:120px;height:16px;background:#d0d0ff"></div>
<div class="a m" style="left:37px;top:482px;">conhost.exe</div>
<svg class="a" style="left:19px;top:483px" width="16" height="16" viewBox="0 0 16 16"><rect x="0" y="2" width="16" height="12" fill="#000"/><rect x="0" y="2" width="16" height="2" fill="#b8bcc4"/><path d="M10.5 2.5h1v1h-1z M12 2.5h1v1h-1z M13.5 2.5h1v1h-1z" fill="#5a6a9a"/><path d="M5 7.3 A2 2.2 0 1 0 5 10.7" stroke="#fff" stroke-width="1.3" fill="none"/><path d="M6.6 7.6v1 M6.6 10v1" stroke="#fff" stroke-width="1.2"/><path d="M8.2 6.8 L10.5 11.2" stroke="#fff" stroke-width="1.2"/><path d="M11.3 11h2.5" stroke="#fff" stroke-width="1.4"/></svg>
<div class="a " style="left:37px;top:499px;width:120px;height:16px;background:#d0d0ff"></div>
<div class="a m" style="left:37px;top:498px;">procexp64.exe</div>
<svg class="a" style="left:19px;top:499px" width="16" height="16" viewBox="0 0 16 16"><path d="M2 5 Q2.2 1.2 5.5 1 Q8.8 1.2 8.3 5Z" fill="#e8501c"/><path d="M3 3.2 Q4.5 1.2 6.5 1.6" stroke="#f8a030" stroke-width="1.2" fill="none"/><path d="M8.4 3.6 Q11 4.6 14.6 3 L13.4 8.6 Q11 9.6 8.4 8.6Z" fill="#86c03c"/><path d="M0.3 9.8 L5.5 11 L5 13.4 L0.3 12.8Z" fill="#2a48b4"/><path d="M1.2 11.2 L3 10.2 L3.6 12.2Z" fill="#d8ecff"/><path d="M7 9.4 Q10 10.2 13 9 L12 15 Q9 15.6 6.4 14.2Z" fill="#f6b61e"/><circle cx="4.6" cy="7.3" r="3.1" fill="#eaf8ff" stroke="#b0cce8" stroke-width="0.8"/><path d="M7.4 10.2 L10.6 14.2" stroke="#e0502a" stroke-width="1.3"/><path d="M10 14 L11 15" stroke="#201008" stroke-width="1.4"/></svg>
<div class="a m" style="left:37px;top:514px;">smss.exe</div>
<svg class="a" style="left:19px;top:515px" width="16" height="16" viewBox="0 0 16 16"><rect x="0.5" y="1.5" width="15" height="12" fill="#fff" stroke="#7e868e"/><rect x="1" y="2" width="14" height="1.6" fill="#d4dae6"/><path d="M10.5 2.3h1v1h-1z M12 2.3h1v1h-1z M13.5 2.3h1v1h-1z" fill="#5a6a9a"/><rect x="2" y="5" width="5" height="6" fill="url(#wg)"/><path d="M8 6.5h4 M8 8.5h4 M8 10.5h4" stroke="#c4c4c4"/><rect x="13" y="5" width="1" height="4" fill="url(#wb)"/></svg>
<div class="a " style="left:1902px;top:68px;width:17px;height:461px;background:#fff;border-left:1px solid #c8c8c8"></div>
<div class="a " style="left:1902px;top:68px;width:17px;height:17px;background:#fff;border:1px solid #c8c8c8;border-top:none;border-right:none"></div>
<div class="a " style="left:1902px;top:512px;width:17px;height:17px;background:#fff;border:1px solid #c8c8c8;border-bottom:none;border-right:none"></div>
<svg class="a" style="left:1906px;top:74px" width="9" height="6"><path d="M1.2 5 L4.5 1.7 L7.8 5" stroke="#606060" stroke-width="1.3" fill="none"/></svg>
<svg class="a" style="left:1906px;top:518px" width="9" height="6"><path d="M1.2 1 L4.5 4.3 L7.8 1" stroke="#606060" stroke-width="1.3" fill="none"/></svg>
<div class="a " style="left:1902px;top:85px;width:17px;height:348px;background:#dcdcdc;border:1px solid #a6a6a6"></div>
<div class="a " style="left:1907px;top:255px;width:7px;height:2px;background:#606060"></div>
<div class="a " style="left:1907px;top:258px;width:7px;height:2px;background:#606060"></div>
<div class="a " style="left:1907px;top:261px;width:7px;height:2px;background:#606060"></div>
<div class="a " style="left:0px;top:530px;width:1920px;height:6px;background:#f0f0f0;border-top:2px solid #fff;border-bottom:1px solid #a0a0a0"></div>
<div class="a " style="left:0px;top:536px;width:1920px;height:482px;background:#fff;border:1px solid #606060;border-bottom-color:#828790"></div>
<div class="a " style="left:1px;top:537px;width:1901px;height:15px;background:linear-gradient(#fff,#fafafa);border-bottom:1px solid #e5e5e5"></div>
<div class="a m" style="left:8px;top:539px;">Type</div>
<svg class="a" style="left:47px;top:539px" width="9" height="5"><path d="M0 5 L9 5 L4.5 0Z" fill="#000"/></svg>
<div class="a " style="left:1902px;top:537px;width:17px;height:480px;background:#fff;border-left:1px solid #c8c8c8"></div>
<div class="a " style="left:1902px;top:537px;width:17px;height:17px;background:#fff;border:1px solid #c8c8c8;border-top:none;border-right:none"></div>
<div class="a " style="left:1902px;top:1000px;width:17px;height:17px;background:#fff;border:1px solid #c8c8c8;border-bottom:none;border-right:none"></div>
<svg class="a" style="left:1906px;top:543px" width="9" height="6"><path d="M1.2 5 L4.5 1.7 L7.8 5" stroke="#606060" stroke-width="1.3" fill="none"/></svg>
<svg class="a" style="left:1906px;top:1006px" width="9" height="6"><path d="M1.2 1 L4.5 4.3 L7.8 1" stroke="#606060" stroke-width="1.3" fill="none"/></svg>
<div class="a " style="left:1902px;top:636px;width:17px;height:170px;background:#dcdcdc;border:1px solid #a6a6a6"></div>
<div class="a " style="left:1907px;top:717px;width:7px;height:2px;background:#606060"></div>
<div class="a " style="left:1907px;top:720px;width:7px;height:2px;background:#606060"></div>
<div class="a " style="left:1907px;top:723px;width:7px;height:2px;background:#606060"></div>
<div class="a" style="left:1px;top:552px;width:1900px;height:465px;overflow:hidden">
<div class="a m" style="left:2px;top:0px">File</div>
<div class="a m" style="left:2px;top:13px">File</div>
<div class="a m" style="left:2px;top:26px">File</div>
<div class="a m" style="left:2px;top:39px">File</div>
<div class="a m" style="left:2px;top:52px">File</div>
<div class="a m" style="left:2px;top:65px">File</div>
<div class="a m" style="left:2px;top:78px">File</div>
<div class="a m" style="left:2px;top:91px">File</div>
<div class="a m" style="left:2px;top:104px">File</div>
<div class="a m" style="left:2px;top:117px">File</div>
<div class="a m" style="left:2px;top:130px">File</div>
<div class="a m" style="left:2px;top:143px">File</div>
<div class="a m" style="left:102px;top:143px">C:\Windows\System32\winevt\Logs\Key Management Service.evtx</div>
<div class="a m" style="left:2px;top:156px">File</div>
<div class="a m" style="left:102px;top:156px">C:\Windows\System32\winevt\Logs\Microsoft-Windows-Security-SPP-UX-Notif...</div>
<div class="a m" style="left:2px;top:169px">File</div>
<div class="a m" style="left:102px;top:169px">C:\Windows\System32\winevt\Logs\Application.evtx</div>
<div class="a m" style="left:2px;top:182px">File</div>
<div class="a m" style="left:102px;top:182px">C:\Windows\System32\winevt\Logs\security.evtx</div>
<div class="a m" style="left:2px;top:195px">File</div>
<div class="a m" style="left:102px;top:195px">\Device\DeviceApi</div>
<div class="a m" style="left:2px;top:208px">File</div>
<div class="a m" style="left:102px;top:208px">C:\Windows\System32\winevt\Logs\Windows PowerShell.evtx</div>
<div class="a m" style="left:2px;top:221px">File</div>
<div class="a m" style="left:102px;top:221px">C:\Windows\System32\winevt\Logs\Microsoft-Windows-Windows Firewall With...</div>
<div class="a m" style="left:2px;top:234px">File</div>
<div class="a m" style="left:102px;top:234px">C:\Windows\System32\winevt\Logs\Microsoft-Windows-WinINet-Config%4Proxy...</div>
<div class="a m" style="left:2px;top:247px">File</div>
<div class="a m" style="left:102px;top:247px">C:\Windows\System32\winevt\Logs\Microsoft-Windows-Kernel-StoreMgr%4Oper...</div>
<div class="a m" style="left:2px;top:260px">File</div>
<div class="a m" style="left:102px;top:260px">C:\Windows\System32\winevt\Logs\Microsoft-Windows-NetworkProfile%4Opera...</div>
<div class="a m" style="left:2px;top:273px">File</div>
<div class="a m" style="left:102px;top:273px">C:\Windows\System32\winevt\Logs\HardwareEvents.evtx</div>
<div class="a m" style="left:2px;top:286px">File</div>
<div class="a m" style="left:102px;top:286px">C:\Windows\System32\winevt\Logs\Microsoft-Windows-NCSI%4Operational.evtx</div>
<div class="a m" style="left:2px;top:299px">File</div>
<div class="a m" style="left:102px;top:299px">C:\Windows\System32\winevt\Logs\Microsoft-Windows-Windows Firewall With...</div>
<div class="a m" style="left:2px;top:312px">File</div>
<div class="a m" style="left:102px;top:312px">\Device\WMIDataDevice</div>
<div class="a m" style="left:2px;top:325px">File</div>
<div class="a m" style="left:102px;top:325px">\Device\WMIDataDevice</div>
<div class="a m" style="left:2px;top:338px">File</div>
<div class="a m" style="left:102px;top:338px">\Device\Ndis</div>
<div class="a m" style="left:2px;top:351px">File</div>
<div class="a m" style="left:102px;top:351px">C:\Windows\System32\zh-CN\wevtsvc.dll.mui</div>
<div class="a m" style="left:2px;top:364px">Key</div>
<div class="a m" style="left:102px;top:364px">HKLM\SYSTEM\ControlSet001\Control\Nls\Sorting\Versions</div>
<div class="a m" style="left:2px;top:377px">Key</div>
<div class="a m" style="left:102px;top:377px">HKLM\SYSTEM\ControlSet001\Control\SESSION MANAGER</div>
<div class="a m" style="left:2px;top:390px">Key</div>
<div class="a m" style="left:102px;top:390px">HKCR</div>
<div class="a m" style="left:2px;top:403px">Key</div>
<div class="a m" style="left:102px;top:403px">HKU\S-1-5-19\Control Panel\International</div>
<div class="a m" style="left:2px;top:416px">Key</div>
<div class="a m" style="left:102px;top:416px">HKLM\SYSTEM\ControlSet001\Control\Nls\Sorting\Ids</div>
<div class="a m" style="left:2px;top:429px">Key</div>
<div class="a m" style="left:102px;top:429px">HKLM\SYSTEM\ControlSet001\Services\WinSock2\Parameters\Protocol_Catalog9</div>
<div class="a m" style="left:2px;top:442px">Key</div>
<div class="a m" style="left:102px;top:442px">HKLM\SYSTEM\ControlSet001\Services\WinSock2\Parameters\NameSpace_Catalog5</div>
<div class="a m" style="left:2px;top:455px">Key</div>
<div class="a m" style="left:102px;top:455px">HKLM\SYSTEM\ControlSet001\Services\EventLog</div>
</div>
<div class="a t" style="left:1534px;top:942.5px;font-size:21px;line-height:26px;color:#b4b4b4">激活 Windows</div>
<div class="a t" style="left:1534px;top:971px;font-size:15px;line-height:20px;letter-spacing:0.242px;color:#b4b4b4">转到“控制面板”中的“系统”以激活 </div>
<div class="a t" style="left:1757.5px;top:971px;font-size:15px;line-height:20px;transform-origin:0 0;transform:scaleX(1.0846);color:#b4b4b4">Windows。</div>
<div class="a " style="left:0px;top:1018px;width:1920px;height:22px;background:#fff;border-top:1px solid #696969"></div>
<div class="a t" style="left:3px;top:1022px;font-size:12.5px;line-height:17px;letter-spacing:-0.165px;">CPU Usage: 9.17%</div>
<div class="a t" style="left:128px;top:1022px;font-size:12.5px;line-height:17px;letter-spacing:0.125px;">Commit Charge: 35.72%</div>
<div class="a t" style="left:278px;top:1022px;font-size:12.5px;line-height:17px;letter-spacing:-0.093px;">Processes: 31</div>
<div class="a t" style="left:367px;top:1022px;font-size:12.5px;line-height:17px;letter-spacing:-0.045px;">Physical Usage: 30.44%</div>
<div class="a " style="left:123px;top:1020px;width:1px;height:19px;background:#d0d0d0"></div>
<div class="a " style="left:273px;top:1020px;width:1px;height:19px;background:#d0d0d0"></div>
<div class="a " style="left:362px;top:1020px;width:1px;height:19px;background:#d0d0d0"></div>
<div class="a " style="left:507px;top:1020px;width:1px;height:19px;background:#d0d0d0"></div>
<div class="a " style="left:82px;top:104px;width:447px;height:593px;background:#c5d8df;border:1px solid #5a6068"></div>
<div class="a " style="left:90px;top:134px;width:431px;height:556px;background:#b4c4cc"></div>
<div class="a " style="left:90px;top:135px;width:431px;height:554px;background:#f0f0f0"></div>
<svg class="a" style="left:92px;top:110px" width="16" height="16" viewBox="0 0 16 16"><rect x="0.5" y="1.5" width="15" height="12" fill="#fff" stroke="#7e868e"/><rect x="1" y="2" width="14" height="1.6" fill="#d4dae6"/><path d="M10.5 2.3h1v1h-1z M12 2.3h1v1h-1z M13.5 2.3h1v1h-1z" fill="#5a6a9a"/><rect x="2" y="5" width="5" height="6" fill="url(#wg)"/><path d="M8 6.5h4 M8 8.5h4 M8 10.5h4" stroke="#c4c4c4"/><rect x="13" y="5" width="1" height="4" fill="url(#wb)"/></svg>
<div class="a t" style="left:113px;top:109px;font-size:15px;line-height:22px;transform-origin:0 0;transform:scaleX(1.0705);">svchost.exe:2900 (LocalServiceNetwork...</div>
<div class="a " style="left:422px;top:104px;width:101px;height:22px;border:1px solid #5e666e;border-top:none"></div>
<div class="a " style="left:450px;top:105px;width:1px;height:20px;background:#5e666e"></div>
<div class="a " style="left:476px;top:105px;width:1px;height:20px;background:#5e666e"></div>
<div class="a " style="left:431px;top:116px;width:10px;height:3px;background:#000"></div>
<div class="a " style="left:459px;top:111px;width:10px;height:8px;border:2px solid #000"></div>
<svg class="a" style="left:495px;top:111px" width="10" height="8" viewBox="0 0 10 8"><path d="M0.3 0 L3.3 0 L5 2.3 L6.7 0 L9.7 0 L6.5 4 L9.7 8 L6.7 8 L5 5.7 L3.3 8 L0.3 8 L3.5 4Z" fill="#000"/></svg>
<div class="a " style="left:99px;top:178px;width:410px;height:468px;background:#fff;border:1px solid #898e98"></div>
<div class="tab" style="left:101px;top:142px;width:64px;height:18px;border-bottom:1px solid #898e98;line-height:18px;letter-spacing:-0.165px">Image</div>
<div class="tab" style="left:166px;top:142px;width:96px;height:18px;border-bottom:1px solid #898e98;line-height:18px;letter-spacing:-0.216px">Performance</div>
<div class="tab" style="left:262px;top:142px;width:127px;height:18px;border-bottom:1px solid #898e98;line-height:18px;letter-spacing:-0.212px">Performance Graph</div>
<div class="tab" style="left:390px;top:142px;width:118px;height:18px;border-bottom:1px solid #898e98;line-height:18px;letter-spacing:-0.184px">Disk and Network</div>
<div class="tab" style="left:101px;top:160px;width:67px;height:18px;line-height:18px;letter-spacing:-0.691px">GPU Graph</div>
<div class="tab" style="left:169px;top:160px;width:54px;height:18px;line-height:18px;letter-spacing:-0.323px">Services</div>
<div class="tab" style="left:282px;top:160px;width:47px;height:18px;line-height:18px;letter-spacing:-0.492px">TCP/IP</div>
<div class="tab" style="left:329px;top:160px;width:55px;height:18px;line-height:18px;letter-spacing:-0.167px">Security</div>
<div class="tab" style="left:384px;top:160px;width:75px;height:18px;line-height:18px;letter-spacing:-0.159px">Environment</div>
<div class="tab" style="left:459px;top:160px;width:49px;height:18px;line-height:18px;letter-spacing:-0.191px">Strings</div>
<div class="tab" style="left:223px;top:158px;width:59px;height:21px;background:#fff;line-height:19px;letter-spacing:-0.05px">Threads</div>
<div class="a t" style="left:117px;top:185px;">Count:</div>
<div class="a t" style="left:160px;top:185px;">12</div>
<div class="a " style="left:114px;top:203px;width:383px;height:258px;background:#fff;border:1px solid #828790"></div>
<div class="a " style="left:116px;top:205px;width:379px;height:14px;background:linear-gradient(#fff,#fafafa);border-bottom:1px solid #e5e5e5"></div>
<div class="a " style="left:165px;top:205px;width:1px;height:14px;background:#e0e0e0"></div>
<div class="a m" style="left:122px;top:206px;">TID</div>
<div class="a " style="left:215px;top:205px;width:1px;height:14px;background:#e0e0e0"></div>
<div class="a m" style="left:166px;top:206px;width:44px;text-align:right">CPU</div>
<div class="a " style="left:290px;top:205px;width:1px;height:14px;background:#e0e0e0"></div>
<div class="a m" style="left:225px;top:206px;">Cycles ...</div>
<div class="a " style="left:350px;top:205px;width:1px;height:14px;background:#e0e0e0"></div>
<div class="a m" style="left:297px;top:206px;">Service</div>
<div class="a " style="left:495px;top:205px;width:1px;height:14px;background:#e0e0e0"></div>
<div class="a m" style="left:357px;top:206px;">Start Address</div>
<svg class="a" style="left:317px;top:206px" width="8" height="4"><path d="M0 0 L8 0 L4 4Z" fill="#000"/></svg>
<div class="a" style="left:116px;top:220px;width:379px;height:222px;overflow:hidden">
<div class="a m" style="left:2px;top:0px">676</div>
<div class="a m" style="left:0px;top:0px;width:91px;text-align:right">0.05</div>
<div class="a m" style="left:100px;top:0px;width:66px;text-align:right">1,630,479</div>
<div class="a m" style="left:237px;top:0px">ntdll.dll!RtlMultiByteToWideCharN</div>
<div class="a m" style="left:2px;top:17px">2300</div>
<div class="a m" style="left:237px;top:17px">svchost.exe+0x218c</div>
<div class="a m" style="left:2px;top:34px">2104</div>
<div class="a m" style="left:237px;top:34px">ntdll.dll!RtlMultiByteToWideCharN</div>
<div class="a m" style="left:2px;top:51px">956</div>
<div class="a m" style="left:177px;top:51px">Wcmsvc</div>
<div class="a m" style="left:237px;top:51px">wcmsvc.dll!SvchostPushServiceGlobals</div>
<div class="a m" style="left:2px;top:68px">1200</div>
<div class="a m" style="left:177px;top:68px">lmhosts</div>
<div class="a m" style="left:237px;top:68px">sechost.dll!GetIdentityProviderInfo</div>
<div class="a m" style="left:2px;top:85px">2268</div>
<div class="a m" style="left:177px;top:85px">lmhosts</div>
<div class="a m" style="left:237px;top:85px">lmhsvc.dll!ServiceMain+0x1f0</div>
<div class="a m" style="left:2px;top:102px">2416</div>
<div class="a m" style="left:177px;top:102px">EventLog</div>
<div class="a m" style="left:237px;top:102px">wevtsvc.dll+0x374f8</div>
<div class="a" style="left:0;top:119px;width:380px;height:17px;background:#b2b2b2"></div>
<div class="a m" style="left:2px;top:119px">2884</div>
<div class="a m" style="left:177px;top:119px">EventLog</div>
<div class="a m" style="left:237px;top:119px">wevtsvc.dll+0x1b7c4</div>
<div class="a m" style="left:2px;top:136px">644</div>
<div class="a m" style="left:177px;top:136px">EventLog</div>
<div class="a m" style="left:237px;top:136px">wevtsvc.dll+0x1b7c4</div>
<div class="a m" style="left:2px;top:153px">1804</div>
<div class="a m" style="left:177px;top:153px">EventLog</div>
<div class="a m" style="left:237px;top:153px">wevtsvc.dll+0x1b7c4</div>
<div class="a m" style="left:2px;top:170px">744</div>
<div class="a m" style="left:177px;top:170px">Dhcp</div>
<div class="a m" style="left:237px;top:170px">sechost.dll!GetIdentityProviderInfo</div>
<div class="a m" style="left:2px;top:187px">2188</div>
<div class="a m" style="left:177px;top:187px">Dhcp</div>
<div class="a m" style="left:237px;top:187px">dhcpcore6.dll!Dhcpv6Main+0x100</div>
</div>
<div class="a " style="left:116px;top:442px;width:379px;height:17px;background:#fff;border:1px solid #e0e0e0"></div>
<div class="a " style="left:133px;top:442px;width:301px;height:17px;background:#dcdcdc;border:1px solid #a6a6a6"></div>
<svg class="a" style="left:121px;top:446px" width="6" height="9"><path d="M5.2 0.7 L1.4 4.5 L5.2 8.3" stroke="#606060" stroke-width="1.4" fill="none"/></svg>
<svg class="a" style="left:483px;top:446px" width="6" height="9"><path d="M0.8 0.7 L4.6 4.5 L0.8 8.3" stroke="#606060" stroke-width="1.4" fill="none"/></svg>
<div class="a " style="left:477px;top:442px;width:1px;height:17px;background:#e0e0e0"></div>
<div class="a " style="left:280px;top:447px;width:2px;height:7px;background:#606060"></div>
<div class="a " style="left:283px;top:447px;width:2px;height:7px;background:#606060"></div>
<div class="a " style="left:286px;top:447px;width:2px;height:7px;background:#606060"></div>
<div class="a t" style="left:113px;top:471px;font-size:11px;line-height:14px;letter-spacing:-0.097px;">Thread ID:</div>
<div class="a t" style="left:218px;top:471px;font-size:11px;line-height:14px;letter-spacing:0.000px;">2884</div>
<div class="a t" style="left:113px;top:490px;font-size:11px;line-height:14px;letter-spacing:-0.162px;">Start Time:</div>
<div class="a t" style="left:218px;top:490px;font-size:11px;line-height:14px;letter-spacing:0.079px;">17:34:46   2018/7/26</div>
<div class="a t" style="left:113px;top:510px;font-size:11px;line-height:14px;letter-spacing:0.043px;">State:</div>
<div class="a t" style="left:218px;top:510px;font-size:11px;line-height:14px;letter-spacing:-0.078px;">Wait:UserRequest</div>
<div class="a t" style="left:113px;top:529px;font-size:11px;line-height:14px;letter-spacing:-0.363px;">Kernel Time:</div>
<div class="a t" style="left:218px;top:529px;font-size:11px;line-height:14px;letter-spacing:0.126px;">0:00:00.000</div>
<div class="a t" style="left:113px;top:549px;font-size:11px;line-height:14px;letter-spacing:-0.378px;">User Time:</div>
<div class="a t" style="left:218px;top:549px;font-size:11px;line-height:14px;letter-spacing:0.126px;">0:00:00.000</div>
<div class="a t" style="left:113px;top:568px;font-size:11px;line-height:14px;letter-spacing:-0.032px;">Context Switches:</div>
<div class="a t" style="left:218px;top:568px;font-size:11px;line-height:14px;letter-spacing:0.000px;">5</div>
<div class="a t" style="left:113px;top:589px;font-size:11px;line-height:14px;letter-spacing:-0.295px;">Cycles:</div>
<div class="a t" style="left:218px;top:589px;font-size:11px;line-height:14px;letter-spacing:0.007px;">6,333,138</div>
<div class="a t" style="left:332px;top:510px;font-size:11px;line-height:14px;letter-spacing:-0.101px;">Base Priority:</div>
<div class="a t" style="left:431px;top:510px;font-size:11px;line-height:14px;letter-spacing:0.000px;">8</div>
<div class="a t" style="left:332px;top:529px;font-size:11px;line-height:14px;letter-spacing:-0.125px;">Dynamic Priority:</div>
<div class="a t" style="left:431px;top:529px;font-size:11px;line-height:14px;letter-spacing:0.000px;">8</div>
<div class="a t" style="left:332px;top:549px;font-size:11px;line-height:14px;letter-spacing:0.153px;">I/O Priority:</div>
<div class="a t" style="left:431px;top:549px;font-size:11px;line-height:14px;letter-spacing:-0.408px;">Normal</div>
<div class="a t" style="left:332px;top:568px;font-size:11px;line-height:14px;letter-spacing:-0.067px;">Memory Priority:</div>
<div class="a t" style="left:431px;top:568px;font-size:11px;line-height:14px;letter-spacing:0.000px;">5</div>
<div class="a t" style="left:332px;top:589px;font-size:11px;line-height:14px;letter-spacing:-0.124px;">Ideal Processor:</div>
<div class="a t" style="left:431px;top:589px;font-size:11px;line-height:14px;letter-spacing:0.000px;">0</div>
<div class="btn" style="left:343px;top:467px;width:73px;height:21px;line-height:21px;letter-spacing:-0.302px;"><u>S</u>tack</div>
<div class="btn" style="left:422px;top:467px;width:73px;height:21px;line-height:21px;letter-spacing:-0.263px;"><u>M</u>odule</div>
<div class="btn" style="left:260px;top:615px;width:73px;height:21px;line-height:21px;letter-spacing:-0.446px;"><u>P</u>ermissions</div>
<div class="btn" style="left:343px;top:615px;width:73px;height:21px;line-height:21px;letter-spacing:-0.667px;"><u>K</u>ill</div>
<div class="btn" style="left:422px;top:615px;width:73px;height:21px;line-height:21px;letter-spacing:-0.382px;">Sus<u>p</u>end</div>
<div class="btn" style="left:346px;top:659px;width:73px;height:21px;line-height:21px;letter-spacing:-0.822px;"><u>O</u>K</div>
<div class="btn" style="left:433px;top:659px;width:73px;height:21px;line-height:21px;letter-spacing:-0.415px;"><u>C</u>ancel</div>
<div class="a " style="left:516px;top:679px;width:2px;height:2px;background:#c4c4c4"></div>
<div class="a " style="left:516px;top:682px;width:2px;height:2px;background:#c4c4c4"></div>
<div class="a " style="left:516px;top:685px;width:2px;height:2px;background:#c4c4c4"></div>
<div class="a " style="left:513px;top:682px;width:2px;height:2px;background:#c4c4c4"></div>
<div class="a " style="left:513px;top:685px;width:2px;height:2px;background:#c4c4c4"></div>
<div class="a " style="left:510px;top:685px;width:2px;height:2px;background:#c4c4c4"></div>
<div class="a " style="left:530px;top:221px;width:960px;height:495px;background:#c5d8df;border:1px solid #5a6068"></div>
<div class="a " style="left:538px;top:251px;width:944px;height:458px;background:#b4c4cc"></div>
<div class="a " style="left:538px;top:252px;width:944px;height:456px;background:#f0f0f0"></div>
<svg class="a" style="left:540px;top:228px" width="16" height="16" viewBox="0 0 16 16"><path d="M2 5 Q2.2 1.2 5.5 1 Q8.8 1.2 8.3 5Z" fill="#e8501c"/><path d="M3 3.2 Q4.5 1.2 6.5 1.6" stroke="#f8a030" stroke-width="1.2" fill="none"/><path d="M8.4 3.6 Q11 4.6 14.6 3 L13.4 8.6 Q11 9.6 8.4 8.6Z" fill="#86c03c"/><path d="M0.3 9.8 L5.5 11 L5 13.4 L0.3 12.8Z" fill="#2a48b4"/><path d="M1.2 11.2 L3 10.2 L3.6 12.2Z" fill="#d8ecff"/><path d="M7 9.4 Q10 10.2 13 9 L12 15 Q9 15.6 6.4 14.2Z" fill="#f6b61e"/><circle cx="4.6" cy="7.3" r="3.1" fill="#eaf8ff" stroke="#b0cce8" stroke-width="0.8"/><path d="M7.4 10.2 L10.6 14.2" stroke="#e0502a" stroke-width="1.3"/><path d="M10 14 L11 15" stroke="#201008" stroke-width="1.4"/></svg>
<div class="a t" style="left:923.5px;top:225px;font-size:15px;line-height:22px;transform-origin:0 0;transform:scaleX(1.0458);">Process Explorer Search</div>
<div class="a " style="left:1450px;top:222px;width:34px;height:21px;border:1px solid #5e666e;border-top:none"></div>
<svg class="a" style="left:1463px;top:228px" width="10" height="8" viewBox="0 0 10 8"><path d="M0.3 0 L3.3 0 L5 2.3 L6.7 0 L9.7 0 L6.5 4 L9.7 8 L6.7 8 L5 5.7 L3.3 8 L0.3 8 L3.5 4Z" fill="#000"/></svg>
<div class="a t" style="left:548.5px;top:270px;font-size:11px;line-height:14px;letter-spacing:-0.216px;">Handle or DLL substring:</div>
<div class="a " style="left:681px;top:267px;width:652px;height:20px;background:#fff;border:1px solid #7a7a7a"></div>
<div class="a t" style="left:684.5px;top:270px;font-size:11px;line-height:14px;letter-spacing:0.240px;">security.evtx</div>
<div class="btn" style="left:1347px;top:266px;width:58px;height:21px;line-height:21px;letter-spacing:-0.309px;border-color:#5a5a5a;background:#dcdcdc"><u>S</u>earch</div>
<div class="btn" style="left:1414px;top:266px;width:58px;height:21px;line-height:21px;letter-spacing:-0.415px;border-color:#c2c2c2;background:#f5f5f5;color:#8c8c8c"><u>C</u>ancel</div>
<div class="a " style="left:549px;top:298px;width:923px;height:389px;background:#fff;border:1px solid #828790"></div>
<div class="a " style="left:551px;top:300px;width:919px;height:15px;background:linear-gradient(#fff,#fafafa);border-bottom:1px solid #e5e5e5"></div>
<div class="a " style="left:625px;top:300px;width:1px;height:14px;background:#e0e0e0"></div>
<div class="a m" style="left:557px;top:301px;">Process</div>
<div class="a " style="left:665px;top:300px;width:1px;height:14px;background:#e0e0e0"></div>
<div class="a m" style="left:632px;top:301px;">PID</div>
<div class="a " style="left:715px;top:300px;width:1px;height:14px;background:#e0e0e0"></div>
<div class="a m" style="left:672px;top:301px;">Type</div>
<div class="a " style="left:1105px;top:300px;width:1px;height:14px;background:#e0e0e0"></div>
<div class="a m" style="left:722px;top:301px;">Name</div>
<svg class="a" style="left:643px;top:301px" width="8" height="4"><path d="M0 4 L8 4 L4 0Z" fill="#000"/></svg>
<div class="a m" style="left:553px;top:315px;">svchost.exe</div>
<div class="a m" style="left:628px;top:315px;">2900</div>
<div class="a m" style="left:668px;top:315px;">File</div>
<div class="a m" style="left:718px;top:315px;">C:\Windows\System32\winevt\Logs\Microsoft-Windows-Windows Fir...</div>
<div class="a t" style="left:551px;top:690px;letter-spacing:-0.5px">1 matching items.</div>
<div class="a " style="left:1477px;top:698px;width:2px;height:2px;background:#c4c4c4"></div>
<div class="a " style="left:1477px;top:701px;width:2px;height:2px;background:#c4c4c4"></div>
<div class="a " style="left:1477px;top:704px;width:2px;height:2px;background:#c4c4c4"></div>
<div class="a " style="left:1474px;top:701px;width:2px;height:2px;background:#c4c4c4"></div>
<div class="a " style="left:1474px;top:704px;width:2px;height:2px;background:#c4c4c4"></div>
<div class="a " style="left:1471px;top:704px;width:2px;height:2px;background:#c4c4c4"></div>
<div class="a " style="left:576px;top:354px;width:677px;height:443px;background:#68caea;border:1px solid #3c3a3c"></div>
<svg class="a" style="left:588px;top:364px" width="16" height="13" viewBox="0 0 16 13"><rect width="16" height="13" fill="#000"/><rect width="16" height="2.5" fill="#c8c8c8"/><text x="1" y="10.5" font-family="Liberation Sans, sans-serif" font-size="7" font-weight="bold" fill="#fff">C:\.</text></svg>
<div class="a t" style="left:773px;top:360px;font-size:15px;line-height:22px;transform-origin:0 0;transform:scaleX(1.0759);">管理员: C:\Windows\system32\cmd.exe</div>
<div class="a " style="left:1144px;top:354px;width:101px;height:22px;border:1px solid #3c3a3c;border-top:none"></div>
<div class="a " style="left:1199px;top:355px;width:45px;height:20px;background:#c85a52"></div>
<div class="a " style="left:1172px;top:355px;width:1px;height:20px;background:#3c3a3c"></div>
<div class="a " style="left:1198px;top:355px;width:1px;height:20px;background:#3c3a3c"></div>
<div class="a " style="left:1153px;top:366px;width:10px;height:3px;background:#000"></div>
<div class="a " style="left:1181px;top:361px;width:10px;height:8px;border:2px solid #000"></div>
<svg class="a" style="left:1217px;top:361px" width="10" height="8" viewBox="0 0 10 8"><path d="M0.3 0 L3.3 0 L5 2.3 L6.7 0 L9.7 0 L6.5 4 L9.7 8 L6.7 8 L5 5.7 L3.3 8 L0.3 8 L3.5 4Z" fill="#000"/></svg>
<div class="a " style="left:586px;top:387px;width:640px;height:400px;background:#000"></div>
<div class="a " style="left:1226px;top:387px;width:17px;height:400px;background:#fff;border-left:1px solid #c8c8c8"></div>
<div class="a " style="left:1226px;top:387px;width:17px;height:17px;background:#fff;border:1px solid #c8c8c8;border-top:none;border-right:none"></div>
<div class="a " style="left:1226px;top:770px;width:17px;height:17px;background:#fff;border:1px solid #c8c8c8;border-bottom:none;border-right:none"></div>
<svg class="a" style="left:1230px;top:393px" width="9" height="6"><path d="M1.2 5 L4.5 1.7 L7.8 5" stroke="#606060" stroke-width="1.3" fill="none"/></svg>
<svg class="a" style="left:1230px;top:776px" width="9" height="6"><path d="M1.2 1 L4.5 4.3 L7.8 1" stroke="#606060" stroke-width="1.3" fill="none"/></svg>
<div class="a " style="left:1226px;top:404px;width:17px;height:31px;background:#dcdcdc;border:1px solid #a6a6a6"></div>
<div class="a " style="left:1231px;top:415px;width:7px;height:2px;background:#606060"></div>
<div class="a " style="left:1231px;top:418px;width:7px;height:2px;background:#606060"></div>
<div class="a " style="left:1231px;top:421px;width:7px;height:2px;background:#606060"></div>
<div class="a cmd" style="left:586px;top:389px">
C:\&gt;EventCleaner.exe suspend
[+] adjust process token succ
[+] get event log service process id : 2900
[+] event log thread :2416. state : suspend
[+] event log thread :2884. state : suspend
[+] event log thread :644. state : suspend
[+] event log thread :1804. state : suspend

C:\&gt;EventCleaner.exe normal
[+] adjust process token succ
[+] get event log service process id : 2900
[+] event log thread :2416. state : normal
[+] event log thread :2884. state : normal
[+] event log thread :644. state : normal
[+] event log thread :1804. state : normal

C:\&gt;</div>
<div class="a " style="left:0px;top:1039px;width:1920px;height:2px;background:#5a6a70"></div>
<div class="a " style="left:0px;top:1041px;width:1920px;height:39px;background:#68caea"></div>
<div class="a " style="left:0px;top:1079px;width:1920px;height:1px;background:#3f6f80"></div>
<div class="a " style="left:175px;top:1041px;width:60px;height:38px;background:#79d0ec;border-left:1px solid #3c8098;border-right:1px solid #3c8098"></div>
<div class="a " style="left:237px;top:1041px;width:60px;height:38px;background:#a3def2;border-left:1px solid #3c8098;border-right:1px solid #3c8098"></div>
<div class="a " style="left:299px;top:1041px;width:60px;height:38px;background:#79d0ec;border-left:1px solid #3c8098;border-right:1px solid #3c8098"></div>
<div class="a " style="left:361px;top:1041px;width:60px;height:38px;background:#79d0ec;border-left:1px solid #3c8098;border-right:1px solid #3c8098"></div>
<div class="a " style="left:423px;top:1041px;width:60px;height:38px;background:#79d0ec;border-left:1px solid #3c8098;border-right:1px solid #3c8098"></div>
<svg class="a" style="left:11px;top:1046px" width="28" height="27" viewBox="0 0 28 28"><path d="M0.5 4.2 L11.5 2.6 L11.5 13.2 L0.5 13.2Z M13 2.4 L27.5 0.3 L27.5 13.2 L13 13.2Z M0.5 14.7 L11.5 14.7 L11.5 25.3 L0.5 23.7Z M13 14.7 L27.5 14.7 L27.5 27.6 L13 25.5Z" fill="#fff"/></svg>
<svg class="a" style="left:64px;top:1043px" width="34" height="33" viewBox="0 0 34 33"><rect x="1.5" y="1.5" width="14" height="27" fill="#2b8fd6" stroke="#fff" stroke-width="1.2"/><rect x="1.5" y="7" width="14" height="1.3" fill="#fff"/><rect x="14" y="15" width="8" height="4" rx="1.5" fill="none" stroke="#fff" stroke-width="3"/><rect x="14" y="15.5" width="8" height="4" rx="1.2" fill="none" stroke="#8090b4" stroke-width="1.6"/><rect x="6.5" y="18.5" width="26" height="13.5" rx="1.5" fill="#8090b4" stroke="#fff" stroke-width="1.2"/><path d="M11 23h17" stroke="#fff" stroke-width="1.2"/><circle cx="12" cy="23" r="1.4" fill="#fff"/><circle cx="27" cy="23" r="1.4" fill="#fff"/></svg>
<svg class="a" style="left:128px;top:1048px" width="30" height="24" viewBox="0 0 30 24"><defs><linearGradient id="psg" x1="0" y1="0" x2="1" y2="1"><stop offset="0" stop-color="#5aa0e0"/><stop offset="0.5" stop-color="#2a6cc0"/><stop offset="1" stop-color="#3f88d8"/></linearGradient></defs><path d="M6.5 1.5 H28 a1 1 0 0 1 1 1.3 L24.5 21 a1.5 1.5 0 0 1 -1.5 1.2 H2 a1 1 0 0 1 -1 -1.3 L5 2.7 a1.5 1.5 0 0 1 1.5 -1.2Z" fill="url(#psg)" stroke="#3a78c0" stroke-width="1"/><path d="M9 5 L18 11.5 L7.5 18" stroke="#fff" stroke-width="2.6" fill="none" stroke-linejoin="round" stroke-linecap="round"/><path d="M15 18.5h7" stroke="#fff" stroke-width="2.2" stroke-linecap="round"/></svg>
<svg class="a" style="left:189px;top:1046px" width="32" height="30" viewBox="0 0 32 30"><path d="M2 3.5 h8 l2 2 h4 l1.5-1.5 h8 l1.5 2 h3 v18 h-28z" fill="#f4d27a" stroke="#d8b050" stroke-width="0.8"/><rect x="4" y="1.5" width="3" height="2" fill="#30a030"/><rect x="12" y="3.5" width="3" height="2" fill="#d04020"/><rect x="20" y="5.5" width="3" height="2" fill="#3070e0"/><path d="M1.5 8 h29 v17 h-29z" fill="#f8e09a" stroke="#e0b858" stroke-width="0.8"/><path d="M5 17 h21 a1.5 1.5 0 0 1 1.5 1.5 V28 h-5.5 v-6 h-13 v6 H3.5 V18.5 A1.5 1.5 0 0 1 5 17Z" fill="#7cc0f0" stroke="#c8e8ff" stroke-width="1"/><path d="M5 18 h21 v3 h-21z" fill="#4a98e0"/></svg>
<svg class="a" style="left:251px;top:1047px" width="30" height="25" viewBox="0 0 30 25"><rect x="0.5" y="0.5" width="29" height="23.5" rx="1" fill="#000" stroke="#707070"/><rect x="1" y="1" width="28" height="2.5" fill="#b8b8b8"/><text x="3.5" y="13" font-family="Liberation Sans, sans-serif" font-size="7.5" font-weight="bold" fill="#fff">C:\</text><rect x="17" y="12.5" width="8" height="1.2" fill="#fff"/></svg>
<svg class="a" style="left:313px;top:1048px" width="33" height="28" viewBox="0 0 33 28"><rect x="0.5" y="0.5" width="31" height="21" rx="1" fill="#3d8fe0" stroke="#8ab8e8"/><rect x="1" y="1" width="15" height="20" fill="#56a8ea"/><circle cx="9" cy="8" r="4.2" fill="none" stroke="#e8f4ff" stroke-width="1.6"/><path d="M9 8 L9 2.8 A5.2 5.2 0 0 1 14 7Z" fill="#f8b020"/><rect x="17" y="4.5" width="11" height="4" fill="#e8f4ff"/><rect x="18" y="5.5" width="4" height="2" fill="#2a70c8"/><rect x="23.5" y="5.5" width="3.5" height="2" fill="#2a70c8"/><rect x="17" y="11" width="11" height="4" fill="#e8f4ff"/><rect x="18" y="12" width="4" height="2" fill="#2a70c8"/><rect x="23.5" y="12" width="3.5" height="2" fill="#2a70c8"/><circle cx="6.5" cy="15.5" r="1" fill="#e8f4ff"/><circle cx="10.5" cy="15.5" r="1.2" fill="#f8c040"/><ellipse cx="16" cy="23.5" rx="6.5" ry="4" fill="#d8d8d8" stroke="#a0a0a0" stroke-width="0.6"/></svg>
<svg class="a" style="left:378px;top:1045px" width="26" height="31" viewBox="0 0 26 31"><path d="M19 6 l4 1 v22 l-4 -1z" fill="#6a80b0"/><rect x="2.5" y="1.5" width="18" height="27" rx="1" fill="#b8c4dc" stroke="#7888a8"/><rect x="5.5" y="3.5" width="13" height="23" fill="#c8d2e6"/><path d="M1 4h4 M1 7h4 M1 10h4 M1 13h4 M1 16h4 M1 19h4 M1 22h4 M1 25h4" stroke="#808898" stroke-width="1.2"/><path d="M13.5 6 L18 14 H9Z" fill="#f8d020" stroke="#a08000" stroke-width="0.6"/><rect x="13" y="8.5" width="1.2" height="3" fill="#000"/><rect x="13" y="12" width="1.2" height="1" fill="#000"/><circle cx="11" cy="21" r="4" fill="#e03030" stroke="#a01010" stroke-width="0.5"/><path d="M9.3 19.3l3.4 3.4M12.7 19.3l-3.4 3.4" stroke="#fff" stroke-width="1.4"/></svg>
<svg class="a" style="left:438px;top:1046px" width="31" height="29" viewBox="0 0 31 29"><path d="M5 3 Q9 0 13 2 L10 14 L2 13Z" fill="#e06020"/><path d="M16 4 Q22 8 30 3 L27 16 Q21 19 14 16Z" fill="#70b040"/><path d="M2 15 L9 17 L7 28 Q3 25 0 26Z" fill="#4070c8"/><path d="M12 18 Q19 21 26 18 L24 28 Q17 30 10 27Z" fill="#f0b020"/><circle cx="11" cy="10" r="6.8" fill="#e4f2ff" stroke="#7aa8e0" stroke-width="1.8"/><path d="M7 6.5 a5 5 0 0 1 6 -1.5" stroke="#fff" stroke-width="1.5" fill="none"/><path d="M15.5 15.5 L23 24" stroke="#d07818" stroke-width="3.4" stroke-linecap="round"/></svg>
<svg class="a" style="left:1723px;top:1058px" width="8" height="5"><path d="M0 4.5 L4 0 L8 4.5Z" fill="#000"/></svg>
<svg class="a" style="left:1743px;top:1052px" width="10" height="16" viewBox="0 0 10 16"><path d="M0.7 5.5 h2 L6.5 1 v14 L2.7 10.5 h-2z" fill="#fff" stroke="#4a5a66" stroke-width="0.9"/></svg>
<svg class="a" style="left:1749px;top:1058px" width="10" height="10" viewBox="0 0 10 10"><circle cx="5" cy="5" r="4.6" fill="#e03030"/><path d="M3 3l4 4M7 3l-4 4" stroke="#fff" stroke-width="1.5"/></svg>
<svg class="a" style="left:1767px;top:1052px" width="16" height="15" viewBox="0 0 16 15"><rect x="5.5" y="2" width="9.5" height="8" fill="none" stroke="#fff" stroke-width="1.6"/><path d="M10 10.5v2.5 M6.5 13.5h7" stroke="#fff" stroke-width="1.6"/><rect x="1" y="1" width="4" height="5" rx="1" fill="#6bcaea" stroke="#fff" stroke-width="1.4"/><path d="M3 6v6h3" stroke="#fff" stroke-width="1.4" fill="none"/></svg>
<svg class="a" style="left:1791px;top:1052px" width="16" height="16" viewBox="0 0 16 16"><path d="M1.5 0.5v15" stroke="#fff" stroke-width="1.8"/><path d="M3 1.5 h6 l1.5 1.5 h5 v6.5 h-5.5 l-1.5 -1.5 H3z" fill="#fff" stroke="#5a6a76" stroke-width="0.5"/></svg>
<svg class="a" style="left:1797px;top:1058px" width="10" height="10" viewBox="0 0 10 10"><circle cx="5" cy="5" r="4.6" fill="#e03030"/><path d="M3 3l4 4M7 3l-4 4" stroke="#fff" stroke-width="1.5"/></svg>
<div class="a t" style="left:1819px;top:1051px;font-size:15px;line-height:20px;color:#fff;font-family:"Liberation Sans","Noto Sans CJK SC",sans-serif;text-shadow:0 0 1px #234,0 0 1px #234">英</div>
<div class="a t" style="left:1835px;top:1045px;width:80px;text-align:center;font-size:12px;line-height:15px">17:38</div>
<div class="a t" style="left:1845.5px;top:1063.5px;font-size:12px;line-height:15px;letter-spacing:0.568px;">2018/7/26</div>
</body></html>
